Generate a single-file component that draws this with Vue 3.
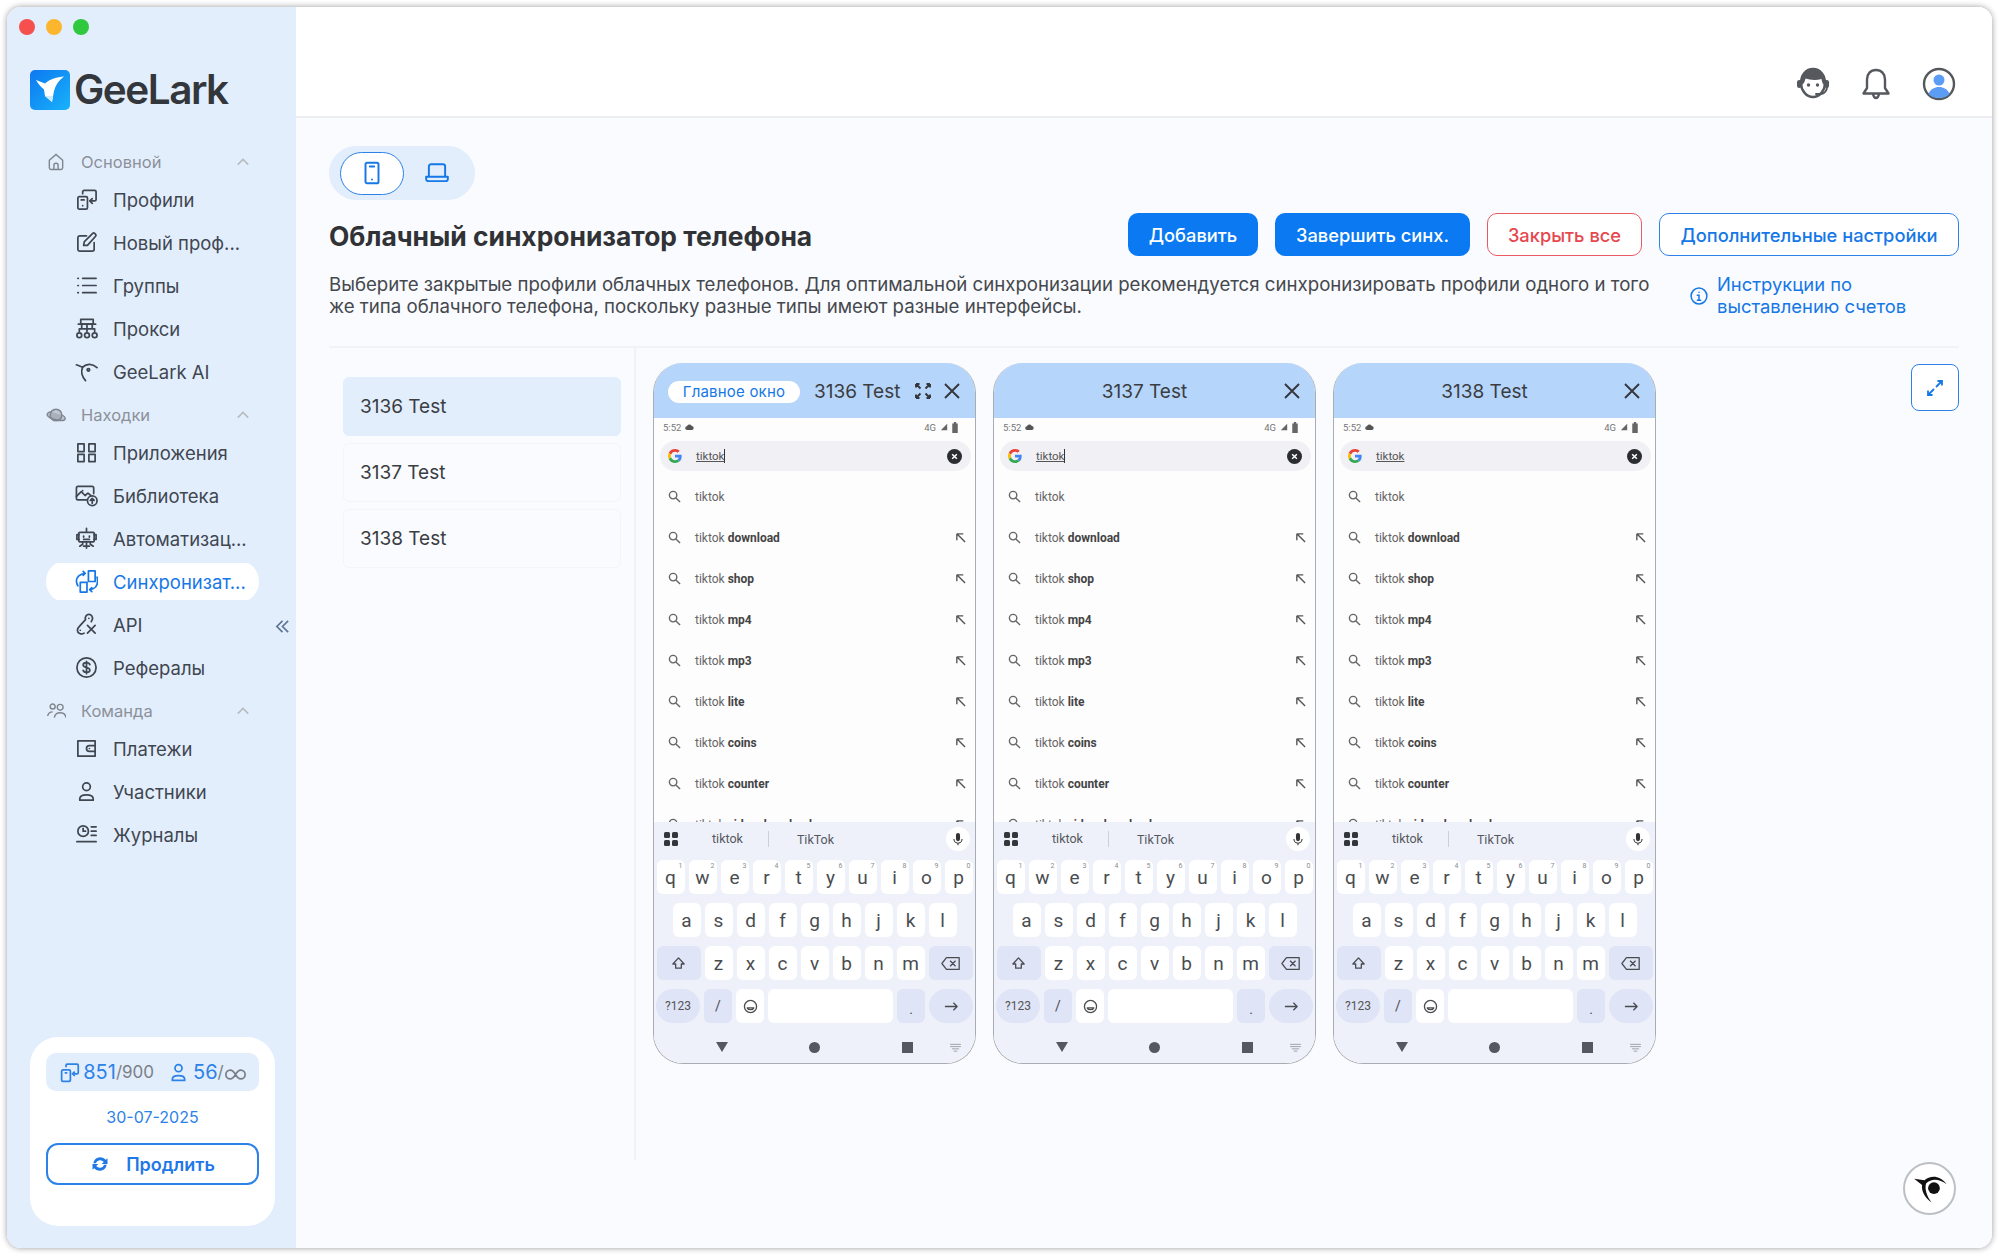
<template>
  <div class="window">
    <aside class="sidebar">
      <div class="traffic">
        <span class="light red"></span>
        <span class="light yellow"></span>
        <span class="light green"></span>
      </div>

      <div class="logo">
        <svg class="logo-mark" viewBox="0 0 40 40">
          <defs>
            <linearGradient id="logoGrad" x1="0" y1="0" x2="1" y2="1">
              <stop offset="0" stop-color="#0d78f0" />
              <stop offset="1" stop-color="#18b2fb" />
            </linearGradient>
          </defs>
          <rect width="40" height="40" rx="5" fill="url(#logoGrad)" />
          <path d="M6 10l9 3.500C20 9 27 7 34 6.500 29 10 25.500 15 24 21l-2 11-7-6-1-6.500C11 17 8 14 6 10z" fill="#fff" />
          <path d="M15 26l7 6 1-6z" fill="#cfe9ff" />
        </svg>
        <span class="logo-text">GeeLark</span>
      </div>

      <nav class="nav">
        <template v-for="section in nav" :key="section.label">
          <div class="nav-section">
            <svg class="section-ico" :class="{ planet: section.icon === 'face' }" viewBox="0 0 24 24">
              <path v-for="d in icons[section.icon]" :key="d" :d="d" />
            </svg>
            <span class="section-label">{{ section.label }}</span>
            <svg class="chev" viewBox="0 0 16 16"><path d="M2 11l6-6 6 6" /></svg>
          </div>
          <div
            v-for="item in section.items"
            :key="item.label"
            class="nav-item"
            :class="{ active: item.active }"
          >
            <svg class="nav-ico" viewBox="0 0 24 24">
              <path v-for="d in icons[item.icon]" :key="d" :d="d" />
            </svg>
            <span>{{ item.label }}</span>
          </div>
        </template>
        <svg class="collapse" viewBox="0 0 16 16"><path d="M8 2L2 8l6 6M14 2L8 8l6 6" /></svg>
      </nav>

      <div class="plan-card">
        <div class="plan-stats">
          <svg class="stat-ico" viewBox="0 0 24 24">
            <path v-for="d in icons.profiles" :key="d" :d="d" />
          </svg>
          <span class="stat-num">851</span><span class="stat-max">/900</span>
          <svg class="stat-ico user" viewBox="0 0 24 24">
            <path v-for="d in icons.member" :key="d" :d="d" />
          </svg>
          <span class="stat-num">56</span><span class="stat-max">/</span>
          <svg class="inf" viewBox="0 0 24 14"><path d="M12 7C10 3.500 8.500 2 6 2a5 5 0 0 0 0 10c2.500 0 4-1.500 6-5s3.500-5 6-5a5 5 0 0 1 0 10c-2.500 0-4-1.500-6-5z" /></svg>
        </div>
        <div class="plan-date">30-07-2025</div>
        <button class="renew">
          <svg viewBox="0 0 24 24"><path d="M4 11a8.500 8.500 0 0 1 15-4l2-2v7h-7l2.500-2.500A5.500 5.500 0 0 0 7 11zM20 13a8.500 8.500 0 0 1-15 4l-2 2v-7h7l-2.500 2.500A5.500 5.500 0 0 0 17 13z" /></svg>
          Продлить
        </button>
      </div>
    </aside>

    <div class="content">
      <header class="topbar">
        <svg class="top-ico" viewBox="0 0 36 36">
          <path d="M6 17C6 9 11 3 18 3s12 6 12 14c0 7-5 14-12 14S6 24 6 17z" fill="#fff" stroke="#55585d" stroke-width="2.400" />
          <path d="M6 19C5 10 10 2.500 18 2.500S31 10 30 19c-2 0-3-3-3.500-6-5 1.500-12 1-16-.5C10 15 8.500 19 6 19z" fill="#55585d" />
          <rect x="2" y="14" width="4.500" height="8" rx="2.200" fill="#55585d" />
          <rect x="29.500" y="14" width="4.500" height="8" rx="2.200" fill="#55585d" />
          <circle cx="13.500" cy="19" r="1.700" fill="#55585d" />
          <circle cx="22.500" cy="19" r="1.700" fill="#55585d" />
          <path d="M32 21c0 4-3 6.500-6 7h-5" fill="none" stroke="#55585d" stroke-width="2" stroke-linecap="round" />
        </svg>
        <svg class="top-ico bell" viewBox="0 0 36 36">
          <path d="M18 4c-5.500 0-9 4-9 9.500V22l-3.500 5.500h25L27 22v-8.500C27 8 23.500 4 18 4zM15 28c.5 2.500 1.700 4 3 4s2.500-1.500 3-4" fill="none" stroke="#55585d" stroke-width="2.400" stroke-linejoin="round" />
        </svg>
        <svg class="top-ico" viewBox="0 0 36 36">
          <circle cx="18" cy="18" r="15" fill="#fff" stroke="#55585d" stroke-width="2.400" />
          <circle cx="18" cy="14" r="5.500" fill="#5b9df5" />
          <path d="M7.500 28c2-5 6-7 10.500-7s8.500 2 10.500 7c-3 3-6.500 4-10.500 4s-7.500-1-10.500-4z" fill="#5b9df5" />
        </svg>
      </header>

      <main class="main">
        <div class="device-toggle">
          <span class="device active">
            <svg viewBox="0 0 24 24"><rect x="6" y="2.500" width="12" height="19" rx="1.500" /><path d="M10 6h4M12 18h.01" /></svg>
          </span>
          <span class="device">
            <svg viewBox="0 0 24 24"><path d="M4.500 15.500V6a2 2 0 0 1 2-2h11a2 2 0 0 1 2 2v9.500M2 15.500h20v2a2 2 0 0 1-2 2H4a2 2 0 0 1-2-2z" /></svg>
          </span>
        </div>

        <div class="title-row">
          <h1>Облачный синхронизатор телефона</h1>
          <div class="actions">
            <button class="btn primary add">Добавить</button>
            <button class="btn primary finish">Завершить синх.</button>
            <button class="btn danger">Закрыть все</button>
            <button class="btn outline">Дополнительные настройки</button>
          </div>
        </div>

        <div class="desc-row">
          <p class="desc">Выберите закрытые профили облачных телефонов. Для оптимальной синхронизации рекомендуется синхронизировать профили одного и того же типа облачного телефона, поскольку разные типы имеют разные интерфейсы.</p>
          <a class="help">
            <svg viewBox="0 0 24 24"><circle cx="12" cy="12" r="9.500" /><path d="M12 7.500h.01M10 11h2v6M10 17h4" /></svg>
            <span>Инструкции по<br />выставлению счетов</span>
          </a>
        </div>

        <div class="workspace">
          <div class="profile-list">
            <div
              v-for="(phone, i) in phones"
              :key="phone"
              class="profile-item"
              :class="{ selected: i === 0 }"
            >
              {{ phone }}
            </div>
          </div>

          <div class="phones">
            <div v-for="(phone, i) in phones" :key="phone" class="phone">
              <div class="phone-head" :class="{ lead: i === 0 }">
                <span v-if="i === 0" class="main-tag">Главное окно</span>
                <span class="phone-name">{{ phone }}</span>
                <svg v-if="i === 0" class="head-ico fs" viewBox="0 0 18 18">
                  <path d="M2 2l4.500 4.500M2 2v3.500M2 2h3.500M16 2l-4.500 4.500M16 2v3.500M16 2h-3.500M2 16l4.500-4.500M2 16v-3.500M2 16h3.500M16 16l-4.500-4.500M16 16v-3.500M16 16h-3.500" />
                </svg>
                <svg class="head-ico x" viewBox="0 0 18 18"><path d="M2 2l14 14M16 2L2 16" /></svg>
              </div>

              <div class="phone-body">
                <div class="status">
                  <span>5:52</span>
                  <svg class="cloud" viewBox="0 0 12 10"><path d="M3 9a2.500 2.500 0 0 1-.4-5A3.500 3.500 0 0 1 9 3.500 2.800 2.800 0 0 1 9.500 9z" /></svg>
                  <span class="status-right">4G</span>
                  <svg class="signal" viewBox="0 0 10 10"><path d="M9 1v8H1z" /></svg>
                  <svg class="battery" viewBox="0 0 7 14"><path d="M2 0h3v2h2v12H0V2h2z" /></svg>
                </div>

                <div class="search-bar">
                  <svg class="g" viewBox="0 0 48 48">
                    <path fill="#EA4335" d="M24 9.500c3.540 0 6.710 1.220 9.210 3.600l6.850-6.850C35.900 2.380 30.470 0 24 0 14.620 0 6.510 5.380 2.560 13.220l7.980 6.190C12.430 13.720 17.740 9.500 24 9.500z" />
                    <path fill="#4285F4" d="M46.980 24.550c0-1.570-.15-3.090-.38-4.550H24v9.020h12.940c-.58 2.960-2.260 5.480-4.780 7.180l7.730 6c4.510-4.180 7.090-10.360 7.090-17.650z" />
                    <path fill="#FBBC05" d="M10.530 28.590c-.48-1.450-.76-2.990-.76-4.590s.27-3.140.76-4.590l-7.980-6.190C.92 16.460 0 20.120 0 24c0 3.880.92 7.540 2.560 10.780l7.970-6.190z" />
                    <path fill="#34A853" d="M24 48c6.480 0 11.930-2.130 15.890-5.810l-7.730-6c-2.150 1.450-4.920 2.300-8.160 2.300-6.260 0-11.570-4.220-13.470-9.910l-7.980 6.190C6.510 42.620 14.620 48 24 48z" />
                  </svg>
                  <span class="query" :class="{ caret: i < 2 }">tiktok</span>
                  <svg class="clear" viewBox="0 0 16 16">
                    <circle cx="8" cy="8" r="8" fill="#2b2d31" />
                    <path d="M5.500 5.500l5 5M10.500 5.500l-5 5" stroke="#fff" stroke-width="1.600" />
                  </svg>
                </div>

                <div class="suggestions">
                  <div v-for="s in suggestions" :key="s" class="suggestion">
                    <svg class="mag" viewBox="0 0 14 14"><circle cx="5.500" cy="5.500" r="4" /><path d="M8.500 8.500L13 13" /></svg>
                    <span class="sugg-text">tiktok <b>{{ s }}</b></span>
                    <svg v-if="s" class="fill-arrow" viewBox="0 0 12 12"><path d="M2 2h7M2 2v7M2 2l9 9" /></svg>
                  </div>
                </div>

                <div class="keyboard">
                  <div class="kb-suggest">
                    <svg class="apps" viewBox="0 0 14 14">
                      <rect width="6" height="6" rx="1.500" />
                      <rect x="8" width="6" height="6" rx="1.500" />
                      <rect y="8" width="6" height="6" rx="1.500" />
                      <rect x="8" y="8" width="6" height="6" rx="1.500" />
                    </svg>
                    <span class="word first">tiktok</span>
                    <span class="word second">TikTok</span>
                    <span class="mic">
                      <svg viewBox="0 0 12 16"><rect x="3.500" y="0" width="5" height="10" rx="2.500" fill="#333" /><path d="M1 7.500a5 5 0 0 0 10 0M6 12.500V15" fill="none" stroke="#333" stroke-width="1.300" /></svg>
                    </span>
                  </div>

                  <div class="kb-row">
                    <span v-for="(k, n) in row1" :key="k" class="key">
                      {{ k }}<sup class="key-num">{{ (n + 1) % 10 }}</sup>
                    </span>
                  </div>
                  <div class="kb-row">
                    <span v-for="k in row2" :key="k" class="key">{{ k }}</span>
                  </div>
                  <div class="kb-row">
                    <span class="key mod wide">
                      <svg viewBox="0 0 16 16"><path d="M8 2l6 6.500h-3V13H5V8.500H2z" /></svg>
                    </span>
                    <span v-for="k in row3" :key="k" class="key">{{ k }}</span>
                    <span class="key mod wide">
                      <svg class="bksp" viewBox="0 0 22 16"><path d="M6 1.500h14v13H6L1 8zM10 5l6 6M16 5l-6 6" /></svg>
                    </span>
                  </div>
                  <div class="kb-row">
                    <span class="key mod wide round small">?123</span>
                    <span class="key mod slash">/</span>
                    <span class="key">
                      <svg class="smile" viewBox="0 0 16 16"><circle cx="8" cy="8" r="6.500" /><path d="M5.500 6.500h.01M10.500 6.500h.01M4.500 9.500c1 2.500 6 2.500 7 0z" /></svg>
                    </span>
                    <span class="key space"></span>
                    <span class="key mod dot">.</span>
                    <span class="key mod wide round">
                      <svg class="enter" viewBox="0 0 16 12"><path d="M1 6h13M10 2l4 4-4 4" /></svg>
                    </span>
                  </div>

                  <div class="kb-nav">
                    <span class="nav-tri"></span>
                    <span class="nav-dot"></span>
                    <span class="nav-sq"></span>
                    <svg class="nav-kb" viewBox="0 0 14 10"><path d="M1 1.500h12M1 4h12M3 6.500h8M5 9h4" /></svg>
                  </div>
                </div>
              </div>
            </div>
          </div>

          <button class="expand">
            <svg viewBox="0 0 18 18"><path d="M10 8l6-6M11.500 2H16v4.500M8 10l-6 6M6.500 16H2v-4.500" /></svg>
          </button>
        </div>

        <div class="assistant">
          <svg viewBox="0 0 24 24">
            <path d="M2 5.500l6.500 1C12 3.500 18 3 22.500 9 18 5.500 13 5 9.500 8.500 8.500 12 10 16.500 13 20.500 8.500 17.500 6.500 13 7 9.500z" />
            <circle cx="14.500" cy="11.500" r="3.700" />
          </svg>
        </div>
      </main>
    </div>
  </div>
</template>

<script setup>
const icons = {
  home: ["M4 10l8-7 8 7v9a2 2 0 0 1-2 2H6a2 2 0 0 1-2-2z", "M9.500 21v-5a2.500 2.500 0 0 1 5 0v5"],
  face: ["M19 12a7 7 0 1 1-14 0 7 7 0 0 1 14 0z", "M5.500 8C2.500 9 1 10.500 1.500 12c1 3 6 5 12 6 5 1 9 .5 9.500-1.500.3-1.500-1-3-3.500-4.500", "M10 11h.01M15 12h.01"],
  team: ["M8 9.500a3 3 0 1 0 0-6 3 3 0 0 0 0 6z", "M17 11a3.500 3.500 0 1 0 0-7 3.500 3.500 0 0 0 0 7z", "M2 18c.5-3 3-5 6-5M10 20c.5-4 3.500-6 7-6s6.500 2 7 6"],
  profiles: ["M3 10.500a1.500 1.500 0 0 1 1.500-1.500h7a1.500 1.500 0 0 1 1.500 1.500v10a1.500 1.500 0 0 1-1.500 1.500h-7A1.500 1.500 0 0 1 3 20.500z", "M8 18.500h.01M6.500 12.500h3", "M8 6V4a1.500 1.500 0 0 1 1.500-1.500h11A1.500 1.500 0 0 1 22 4v8a1.500 1.500 0 0 1-1.500 1.500H16", "M18 11l-2.500 2.500L18 16"],
  edit: ["M20 12v7a2 2 0 0 1-2 2H5a2 2 0 0 1-2-2V7a2 2 0 0 1 2-2h7", "M9 15l.8-4L18.500 2.500a1.500 1.500 0 0 1 2 0l1 1a1.500 1.500 0 0 1 0 2L13 15z"],
  list: ["M3 4.500h.5M3 12h.5M3 19.500h.5", "M8 4.500h14M8 12h14M8 19.500h14"],
  proxy: ["M6 2.500h13v5H6z", "M3.500 7.500h18M7 7.500v5M18 7.500v5M4.500 15v-2.500h16V15M12.500 7.500V15", "M4.500 21.500a2.500 2.500 0 1 0 0-5 2.500 2.500 0 0 0 0 5zM12.500 21.500a2.500 2.500 0 1 0 0-5 2.500 2.500 0 0 0 0 5zM20.500 21.500a2.500 2.500 0 1 0 0-5 2.500 2.500 0 0 0 0 5z"],
  lark: ["M1.500 5l6.500 2.500M8 7.500C12 3.500 18 3.500 23 8", "M8 7.500c-2 4.500-.5 10 3 14", "M14 11.500a1.300 1.300 0 1 0 0-2.600 1.300 1.300 0 0 0 0 2.600z"],
  apps: ["M3 3h6.500v8H3zM14.500 3H21v8h-6.500zM3 14h6.500v7.500H3zM14.500 14H21v7.500h-6.500z"],
  library: ["M19.500 10V4a1.500 1.500 0 0 0-1.500-1.500H3A1.500 1.500 0 0 0 1.500 4v11A1.500 1.500 0 0 0 3 16.500h9", "M1.500 13l5-5 4 4 3-2.500 3 2.500", "M8 7h.01", "M18 22.500a5 5 0 1 0 0-10 5 5 0 0 0 0 10z", "M18 20v-5M16 17l2-2 2 2"],
  robot: ["M12 1.500v3M5 5.500h14a1 1 0 0 1 1 1v8a1 1 0 0 1-1 1H5a1 1 0 0 1-1-1v-8a1 1 0 0 1 1-1z", "M4 8H2v5h2M20 8h2v5h-2", "M9 9.500v1M15 9.500v1M9 13h6", "M8 16v2l-3 2M12 16v6M16 16v2l3 2M9 20h6"],
  sync: ["M14 1h7v11h-7zM5.500 13h7v10h-7z", "M10.500 3.500C5 4 1.500 7.500 1.500 11.500c0 2 .5 3.500 1.500 5", "M8.500 1.500l2 2-2 2", "M23 7.500c.5 1 .5 2.500.5 4.500 0 4.500-3 8-8 8.500", "M17.500 18.500l-2 2 2 2"],
  api: ["M9.500 21c-3 2-7 0-7-3 0-2 1-3 2.500-4.500L11 7c-1-3 1-5.500 3.500-5.500S19 4 18 7l-1 2", "M5.500 18h.01M14.500 5.500h.01", "M13 13l8 8M21 13l-8 8"],
  dollar: ["M12 22a10 10 0 1 0 0-20 10 10 0 0 0 0 20z", "M15.500 9c-.5-1.500-2-2-3.500-2-2 0-3.500 1-3.500 2.500 0 3.500 7 1.500 7 5 0 1.500-1.500 2.500-3.500 2.500-1.500 0-3-.5-3.500-2M12 5.500v13"],
  wallet: ["M3 4h18v16H3z", "M21 9h-6a3 3 0 0 0 0 6h6", "M15 12h.01"],
  member: ["M12 11a4 4 0 1 0 0-8 4 4 0 0 0 0 8z", "M5 21v-1.500c0-2 2-4 7-4s7 2 7 4V21z"],
  logs: ["M8.500 14a5.500 5.500 0 1 0 0-11 5.500 5.500 0 0 0 0 11z", "M8.500 5.500v3h2.500", "M17 4h5M17 8.500h5M17 13h5M2 19.500h20"],
};

const nav = [
  {
    label: "Основной",
    icon: "home",
    items: [
      { label: "Профили", icon: "profiles" },
      { label: "Новый проф...", icon: "edit" },
      { label: "Группы", icon: "list" },
      { label: "Прокси", icon: "proxy" },
      { label: "GeeLark AI", icon: "lark" },
    ],
  },
  {
    label: "Находки",
    icon: "face",
    items: [
      { label: "Приложения", icon: "apps" },
      { label: "Библиотека", icon: "library" },
      { label: "Автоматизац...", icon: "robot" },
      { label: "Синхронизат...", icon: "sync", active: true },
      { label: "API", icon: "api" },
      { label: "Рефералы", icon: "dollar" },
    ],
  },
  {
    label: "Команда",
    icon: "team",
    items: [
      { label: "Платежи", icon: "wallet" },
      { label: "Участники", icon: "member" },
      { label: "Журналы", icon: "logs" },
    ],
  },
];

const phones = ["3136 Test", "3137 Test", "3138 Test"];
const suggestions = ["", "download", "shop", "mp4", "mp3", "lite", "coins", "counter", "video downloader"];
const row1 = "qwertyuiop".split("");
const row2 = "asdfghjkl".split("");
const row3 = "zxcvbnm".split("");
</script>

<style>
body {
  background: #fff;
}
</style>

<style scoped>
* {
  box-sizing: border-box;
}
.window {
  position: relative;
  display: flex;
  width: 1985px;
  height: 1241px;
  margin: 7px;
  border-radius: 14px;
  overflow: hidden;
  box-shadow: 0 0 6px rgba(0, 0, 0, 0.4);
  font-family: Inter, "Noto Sans", sans-serif;
  color: #333;
}
.sidebar {
  width: 289px;
  flex: none;
  display: flex;
  flex-direction: column;
  background: #e3eefd;
}
.traffic {
  display: flex;
  gap: 11px;
  padding: 12px 0 0 12px;
}
.light {
  width: 16px;
  height: 16px;
  border-radius: 50%;
}
.red { background: #f5504e; }
.yellow { background: #fbb62e; }
.green { background: #2fc83f; }
.logo {
  display: flex;
  align-items: center;
  gap: 4px;
  padding: 35px 0 0 23px;
}
.logo-mark {
  width: 40px;
  height: 40px;
}
.logo-text {
  font-weight: 600;
  font-size: 40.500px;
  line-height: 40px;
  letter-spacing: -1.500px;
  color: #33373c;
}
.nav {
  position: relative;
  margin-top: 30px;
}
.nav-section {
  display: flex;
  align-items: center;
  height: 33px;
  margin-top: 5px;
  padding-left: 39px;
  color: #8b9199;
  font-size: 16.500px;
}
.section-ico {
  width: 20px;
  height: 20px;
  fill: none;
  stroke: #7f858d;
  stroke-width: 1.700;
}
.section-ico.planet {
  fill: rgba(127, 133, 141, 0.35);
}
.section-label {
  margin-left: 15px;
  width: 155px;
}
.chev {
  width: 14px;
  height: 14px;
  fill: none;
  stroke: #b6bbc2;
  stroke-width: 1.800;
}
.nav-item {
  position: relative;
  display: flex;
  align-items: center;
  margin-left: 39px;
  width: 213px;
  height: 43px;
  padding-left: 29px;
  gap: 15px;
  font-size: 18.500px;
  color: #3f4650;
  white-space: nowrap;
}
.nav-item.active {
  color: #1677e6;
  background: linear-gradient(#e3eefd 3px, #fff 3px, #fff 40px, #e3eefd 40px);
  border-radius: 22px;
}
.nav-ico {
  width: 23px;
  height: 23px;
  flex: none;
  fill: none;
  stroke: currentColor;
  stroke-width: 1.800;
  stroke-linecap: round;
  stroke-linejoin: round;
}
.collapse {
  position: absolute;
  left: 268px;
  top: 479px;
  width: 15px;
  height: 15px;
  fill: none;
  stroke: #5e7693;
  stroke-width: 1.800;
}
.plan-card {
  margin: auto 21px 22px 23px;
  height: 189px;
  padding: 16px;
  border-radius: 28px;
  background: #fff;
}
.plan-stats {
  display: flex;
  align-items: center;
  justify-content: center;
  height: 38px;
  border-radius: 10px;
  background: #e3eefd;
}
.stat-ico {
  width: 21px;
  height: 21px;
  margin-right: 3px;
  fill: none;
  stroke: #2d82e8;
  stroke-width: 2;
}
.stat-ico.user {
  margin-left: 14px;
  margin-right: 4px;
}
.stat-num {
  color: #2d82e8;
  font-size: 20px;
}
.stat-max {
  color: #7b7f85;
  font-size: 17px;
}
.inf {
  width: 21px;
  height: 13px;
  margin-left: 1px;
  margin-top: 4px;
  fill: none;
  stroke: #7b7f85;
  stroke-width: 2;
}
.plan-date {
  margin-top: 14px;
  text-align: center;
  color: #2d82e8;
  font-size: 16px;
  line-height: 24px;
}
.renew {
  display: flex;
  align-items: center;
  justify-content: center;
  gap: 16px;
  width: 100%;
  height: 42px;
  margin-top: 14px;
  border: 2px solid #2d82e8;
  border-radius: 12px;
  background: #fff;
  color: #1f78e6;
  font: 600 18px Inter, sans-serif;
}
.renew svg {
  width: 20px;
  height: 20px;
  fill: #1f78e6;
}
.content {
  position: relative;
  flex: 1;
  display: flex;
  flex-direction: column;
  background: #f9fbfe;
}
.topbar {
  flex: none;
  display: flex;
  align-items: center;
  justify-content: flex-end;
  gap: 27px;
  height: 111px;
  padding: 45px 35px 0 0;
  background: #fff;
  border-bottom: 2px solid #eceef1;
}
.top-ico {
  width: 36px;
  height: 36px;
}
.main {
  flex: 1;
  padding: 28px 33px 0;
  min-height: 0;
}
.device-toggle {
  display: flex;
  align-items: center;
  gap: 1px;
  width: 146px;
  height: 54px;
  padding-left: 11px;
  border-radius: 27px;
  background: #e3eefd;
}
.device {
  display: flex;
  align-items: center;
  justify-content: center;
  width: 64px;
  height: 43px;
  border-radius: 22px;
}
.device.active {
  border: 1.500px solid #2d82e8;
  background: #fff;
}
.device svg {
  width: 26px;
  height: 26px;
  fill: none;
  stroke: #1677e6;
  stroke-width: 1.800;
  stroke-linecap: round;
  stroke-linejoin: round;
}
.title-row {
  display: flex;
  align-items: center;
  justify-content: space-between;
  margin-top: 13px;
  height: 43px;
}
h1 {
  margin: 2px 0 0;
  font-size: 26.400px;
  font-weight: 700;
  color: #303236;
}
.actions {
  display: flex;
  gap: 17px;
}
.btn {
  height: 43px;
  border-radius: 10px;
  border: 1.500px solid transparent;
  font: 500 18.300px Inter, sans-serif;
}
.btn.primary {
  background: #0a79f2;
  color: #fff;
}
.btn.add { width: 130px; }
.btn.finish { width: 195px; }
.btn.danger {
  width: 155px;
  border-color: #ea5a62;
  background: #fff;
  color: #e5484f;
}
.btn.outline {
  width: 300px;
  border-color: #2d82e8;
  background: #fff;
  color: #1677e6;
}
.desc-row {
  display: flex;
  justify-content: space-between;
  margin-top: 18px;
  height: 74px;
  border-bottom: 2px solid #f0f2f5;
}
.desc {
  margin: 0;
  width: 1330px;
  font-size: 18.650px;
  line-height: 21.500px;
  color: #45484d;
}
.help {
  display: flex;
  align-items: center;
  align-self: flex-start;
  gap: 8px;
  width: 270px;
  height: 43px;
  font-size: 18.400px;
  line-height: 21.500px;
  color: #1677e6;
}
.help svg {
  width: 20px;
  height: 20px;
  flex: none;
  fill: none;
  stroke: currentColor;
  stroke-width: 1.800;
  stroke-linecap: round;
}
.workspace {
  display: flex;
  align-items: flex-start;
}
.profile-list {
  flex: none;
  width: 307px;
  height: 812px;
  display: flex;
  flex-direction: column;
  gap: 7px;
  padding: 29px 13px 0 14px;
  border-right: 2px solid #f0f2f5;
}
.profile-item {
  height: 59px;
  display: flex;
  align-items: center;
  padding-left: 16px;
  border-radius: 6px;
  border: 1px solid #f3f5f8;
  font-size: 19px;
  color: #3a3d42;
}
.profile-item.selected {
  background: #e3eefd;
  border-color: #e3eefd;
}
.phones {
  display: flex;
  gap: 17px;
  padding: 15px 0 0 17px;
}
.phone {
  width: 323px;
  height: 701px;
  display: flex;
  flex-direction: column;
  border: 1px solid #a9adb3;
  border-top: none;
  border-radius: 30px;
  overflow: hidden;
}
.phone-head {
  flex: none;
  display: flex;
  align-items: center;
  justify-content: center;
  position: relative;
  height: 55px;
  padding: 2px 20px 0 0;
  background: #b6d5fb;
  font-size: 19px;
  color: #3a3d42;
}
.phone-head.lead {
  justify-content: flex-start;
  padding: 2px 0 0 14px;
}
.main-tag {
  display: flex;
  align-items: center;
  justify-content: center;
  width: 132px;
  height: 22px;
  border-radius: 11px;
  background: #fff;
  color: #1677e6;
  font-size: 15px;
  letter-spacing: 0.200px;
}
.lead .phone-name {
  margin-left: 14px;
}
.head-ico {
  position: absolute;
  top: 19px;
  right: 14px;
  width: 18px;
  height: 18px;
  fill: none;
  stroke: #33363b;
  stroke-width: 1.900;
}
.head-ico.fs {
  right: 43px;
}
.phone-body {
  flex: 1;
  display: flex;
  flex-direction: column;
  min-height: 0;
  background: #fdfdfe;
  font-family: Roboto, sans-serif;
}
.status {
  flex: none;
  display: flex;
  align-items: center;
  height: 18px;
  padding: 0 17px 0 9px;
  font-size: 9.500px;
  color: #777;
}
.cloud {
  width: 9px;
  height: 8px;
  margin-left: 4px;
  fill: #555;
}
.status-right {
  margin-left: auto;
}
.signal {
  width: 8px;
  height: 8px;
  margin-left: 4px;
  fill: #666;
}
.battery {
  width: 6px;
  height: 11px;
  margin-left: 4px;
  fill: #666;
}
.search-bar {
  flex: none;
  display: flex;
  align-items: center;
  height: 30px;
  margin: 5px 4px 0 6px;
  padding: 0 9px 0 8px;
  border-radius: 15px;
  background: #f1f1f5;
}
.g {
  width: 14px;
  height: 14px;
}
.query {
  margin-left: 14px;
  font-size: 11.500px;
  color: #555;
  text-decoration: underline;
}
.query.caret {
  border-right: 1px solid #333;
}
.clear {
  width: 15px;
  height: 15px;
  margin-left: auto;
}
.suggestions {
  flex: 1;
  min-height: 0;
  overflow: hidden;
  padding-top: 5px;
}
.suggestion {
  display: flex;
  align-items: center;
  height: 41px;
  padding: 0 9px 0 14px;
  font-size: 12px;
  color: #666;
}
.mag {
  width: 13px;
  height: 13px;
  flex: none;
  fill: none;
  stroke: #666;
  stroke-width: 1.500;
}
.sugg-text {
  margin-left: 14px;
}
.sugg-text b {
  color: #444;
}
.fill-arrow {
  width: 11px;
  height: 11px;
  margin-left: auto;
  fill: none;
  stroke: #555;
  stroke-width: 1.500;
}
.keyboard {
  flex: none;
  height: 241px;
  background: #eef1fa;
}
.kb-suggest {
  display: flex;
  align-items: center;
  height: 34px;
  padding: 0 5px 0 10px;
  margin-bottom: 4px;
  font-size: 12.500px;
  color: #55585e;
}
.apps {
  width: 14px;
  height: 14px;
  fill: #33363b;
}
.word.first {
  margin-left: 34px;
  padding-right: 25px;
  border-right: 1px solid #cdd0da;
  line-height: 16px;
}
.word.second {
  margin-left: 28px;
}
.mic {
  margin-left: auto;
  display: flex;
  align-items: center;
  justify-content: center;
  width: 24px;
  height: 24px;
  border-radius: 50%;
  background: #fff;
}
.mic svg {
  width: 10px;
  height: 13px;
}
.kb-row {
  display: flex;
  justify-content: center;
  gap: 4px;
  height: 34px;
  margin-bottom: 9px;
}
.key {
  position: relative;
  width: 28px;
  display: flex;
  align-items: center;
  justify-content: center;
  border-radius: 6px;
  background: #fff;
  font-size: 19px;
  color: #4a4c50;
}
.key.mod {
  background: #dfe4f6;
}
.key.wide {
  width: 44px;
}
.key.round {
  border-radius: 17px;
}
.key.small {
  font-size: 12px;
  color: #555;
}
.key.slash {
  font-size: 14px;
}
.key.space {
  width: 125px;
}
.key.dot {
  font-size: 14px;
  align-items: flex-end;
  padding-bottom: 6px;
}
.key svg {
  width: 15px;
  height: 15px;
  fill: none;
  stroke: #4a4c50;
  stroke-width: 1.400;
  stroke-linejoin: round;
}
.key .bksp {
  width: 20px;
}
.key-num {
  position: absolute;
  top: 2px;
  right: 2px;
  font-size: 7px;
  line-height: 8px;
  color: #8a8c91;
}
.kb-nav {
  display: flex;
  align-items: center;
  height: 32px;
  margin-top: -1px;
  padding-left: 62px;
}
.nav-tri {
  width: 0;
  height: 0;
  border-left: 6px solid transparent;
  border-right: 6px solid transparent;
  border-top: 10px solid #55585e;
}
.nav-dot {
  width: 11px;
  height: 11px;
  margin-left: 81px;
  border-radius: 50%;
  background: #55585e;
}
.nav-sq {
  width: 11px;
  height: 11px;
  margin-left: 82px;
  background: #55585e;
}
.nav-kb {
  width: 13px;
  height: 9px;
  margin-left: 36px;
  fill: none;
  stroke: #9a9ca3;
}
.expand {
  display: flex;
  align-items: center;
  justify-content: center;
  width: 48px;
  height: 47px;
  margin: 16px 0 0 auto;
  padding: 0;
  border: 1.500px solid #2d82e8;
  border-radius: 8px;
  background: #fff;
}
.expand svg {
  width: 18px;
  height: 18px;
  fill: none;
  stroke: #1677e6;
  stroke-width: 1.800;
}
.assistant {
  position: absolute;
  right: 36px;
  bottom: 33px;
  display: flex;
  align-items: center;
  justify-content: center;
  width: 53px;
  height: 53px;
  border: 2px solid #bcbfc4;
  border-radius: 50%;
  background: #fff;
}
.assistant svg {
  width: 38px;
  height: 38px;
  fill: #111;
  stroke: none;
}
</style>
